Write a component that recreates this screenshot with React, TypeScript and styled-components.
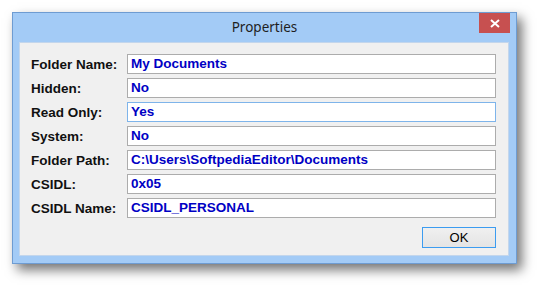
import React from "react";
import styled, { createGlobalStyle } from "styled-components";

const GlobalStyle = createGlobalStyle`
  html, body {
    margin: 0;
    padding: 0;
    background: #ffffff;
  }
`;

const Page = styled.div`
  width: 537px;
  height: 285px;
  padding: 12px 0 0 12px;
  box-sizing: border-box;
`;

const Window = styled.div`
  width: 505px;
  height: 252px;
  box-sizing: border-box;
  border: 1px solid #6e9cd2;
  background: #a3cbf6;
  display: flex;
  flex-direction: column;
  box-shadow: 5px 6px 11px rgba(0, 0, 0, 0.55);
`;

const TitleBar = styled.div`
  height: 29px;
  display: grid;
  grid-template-columns: 1fr auto 1fr;
  align-items: start;
`;

const Title = styled.div`
  grid-column: 2;
  font-family: "Noto Sans", "Open Sans", sans-serif;
  font-size: 13.5px;
  color: #1e1e1e;
  line-height: 29px;
`;

const CloseButton = styled.div`
  grid-column: 3;
  justify-self: end;
  margin-right: 6px;
  width: 31px;
  height: 20px;
  background: #c75050;
  display: flex;
  align-items: center;
  justify-content: center;
`;

const Client = styled.div`
  margin: 0 7px 7px 6px;
  flex: 1;
  background: #f0f0f0;
  border: 1px solid #c3d6ec;
  padding: 11px 12px 7px 11px;
  display: flex;
  flex-direction: column;
`;

const Rows = styled.div`
  display: flex;
  flex-direction: column;
  gap: 4px;
`;

const Row = styled.div`
  display: flex;
  align-items: center;
`;

const Label = styled.div`
  width: 96px;
  font-family: "Liberation Sans", Arial, sans-serif;
  font-weight: bold;
  font-size: 13.5px;
  color: #101010;
`;

const ValueBox = styled.div<{ $focused?: boolean }>`
  flex: 1;
  height: 20px;
  box-sizing: border-box;
  border: 1px solid ${(p) => (p.$focused ? "#7eb4ea" : "#acacac")};
  background: #ffffff;
  padding-left: 3px;
  font-family: "Liberation Sans", Arial, sans-serif;
  font-weight: bold;
  font-size: 13.5px;
  line-height: 18px;
  color: #0000c4;
  white-space: nowrap;
  overflow: hidden;
`;

const Footer = styled.div`
  margin-top: auto;
  display: flex;
  justify-content: flex-end;
`;

const OkButton = styled.div`
  width: 74px;
  height: 21px;
  box-sizing: border-box;
  border: 1px solid #3c9cf0;
  background: linear-gradient(#f0f0f0, #e4e4e4);
  font-family: "Liberation Sans", Arial, sans-serif;
  font-size: 13px;
  color: #000;
  display: flex;
  align-items: center;
  justify-content: center;
`;

const fields = [
  { label: "Folder Name:", value: "My Documents" },
  { label: "Hidden:", value: "No" },
  { label: "Read Only:", value: "Yes", focused: true },
  { label: "System:", value: "No" },
  { label: "Folder Path:", value: "C:\\Users\\SoftpediaEditor\\Documents" },
  { label: "CSIDL:", value: "0x05" },
  { label: "CSIDL Name:", value: "CSIDL_PERSONAL" },
];

export default function App() {
  return (
    <>
      <GlobalStyle />
      <Page>
        <Window>
          <TitleBar>
            <Title>Properties</Title>
            <CloseButton>
              <svg width="10" height="9" viewBox="0 0 10 9">
                <path d="M1 1 L9 8 M9 1 L1 8" stroke="#fff" strokeWidth="2" />
              </svg>
            </CloseButton>
          </TitleBar>
          <Client>
            <Rows>
              {fields.map((f) => (
                <Row key={f.label}>
                  <Label>{f.label}</Label>
                  <ValueBox $focused={f.focused}>{f.value}</ValueBox>
                </Row>
              ))}
            </Rows>
            <Footer>
              <OkButton>OK</OkButton>
            </Footer>
          </Client>
        </Window>
      </Page>
    </>
  );
}
